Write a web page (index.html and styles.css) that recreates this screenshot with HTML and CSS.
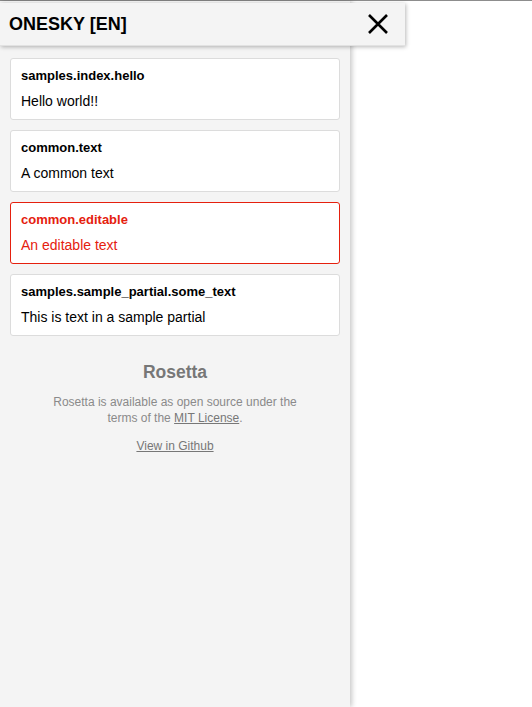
FILE: index.html
```html
<!DOCTYPE html>
<html>
<head>
<meta charset="utf-8">
<link rel="stylesheet" href="styles.css">
</head>
<body>
<div class="topline"></div>
<aside class="sidebar">
  <header class="header">
    <h1 class="title">ONESKY [EN]</h1>
    <button class="close" aria-label="Close">
      <svg width="22" height="22" viewBox="0 0 22 22"><path d="M2 2 L20 20 M20 2 L2 20" stroke="#000" stroke-width="2.6" fill="none"/></svg>
    </button>
  </header>
  <div class="list">
    <div class="card">
      <div class="key">samples.index.hello</div>
      <div class="value">Hello world!!</div>
    </div>
    <div class="card">
      <div class="key">common.text</div>
      <div class="value">A common text</div>
    </div>
    <div class="card card-active">
      <div class="key">common.editable</div>
      <div class="value">An editable text</div>
    </div>
    <div class="card">
      <div class="key">samples.sample_partial.some_text</div>
      <div class="value">This is text in a sample partial</div>
    </div>
  </div>
  <footer class="footer">
    <h2 class="brand">Rosetta</h2>
    <p class="desc">Rosetta is available as open source under the terms of the <a href="#">MIT License</a>.</p>
    <p class="gh"><a href="#">View in Github</a></p>
  </footer>
</aside>
</body>
</html>
```
FILE: styles.css
```css
html, body {
  margin: 0;
  padding: 0;
  background: #fff;
  font-family: "Liberation Sans", Arial, Helvetica, sans-serif;
}
.topline {
  height: 1px;
  background: #8d8d8d;
}
.sidebar {
  width: 350px;
  min-height: calc(100vh - 1px);
  background: #f4f4f4;
  box-shadow: 2px 0 5px rgba(0, 0, 0, 0.22);
  box-sizing: border-box;
  padding-top: 2px;
}
.header {
  position: relative;
  z-index: 2;
  width: 405px;
  height: 43px;
  box-sizing: border-box;
  background: #f4f4f4;
  border-bottom: 1px solid #e2e2e2;
  box-shadow: 1px 1px 4px rgba(0, 0, 0, 0.28);
  display: flex;
  align-items: center;
  justify-content: space-between;
  padding: 0 16px 0 9px;
}
.title {
  margin: 0;
  font-size: 18px;
  font-weight: bold;
  color: #000;
  line-height: 22px;
}
.close {
  border: 0;
  background: none;
  padding: 0;
  width: 22px;
  height: 22px;
  display: flex;
  cursor: pointer;
}
.list {
  display: flex;
  flex-direction: column;
  gap: 10px;
  padding: 12px 10px 0;
}
.card {
  background: #fff;
  border: 1px solid #dcdcdc;
  border-radius: 3px;
  padding: 9px 10px 9px;
  color: #000;
}
.key {
  font-size: 13px;
  line-height: 15px;
  font-weight: bold;
  margin-bottom: 10px;
}
.value {
  font-size: 14px;
  line-height: 17px;
}
.card-active {
  border-color: #e5200e;
  color: #e5200e;
}
.footer {
  text-align: center;
  padding-top: 26px;
}
.brand {
  margin: 0;
  font-size: 17.5px;
  line-height: 20px;
  font-weight: bold;
  color: #777;
}
.desc {
  margin: 12px auto 0;
  max-width: 256px;
  font-size: 12px;
  line-height: 16px;
  color: #8a8a8a;
}
.desc a, .gh a {
  color: #777;
  text-decoration: underline;
}
.gh {
  margin: 12px 0 0;
  font-size: 12px;
  line-height: 16px;
}
```
